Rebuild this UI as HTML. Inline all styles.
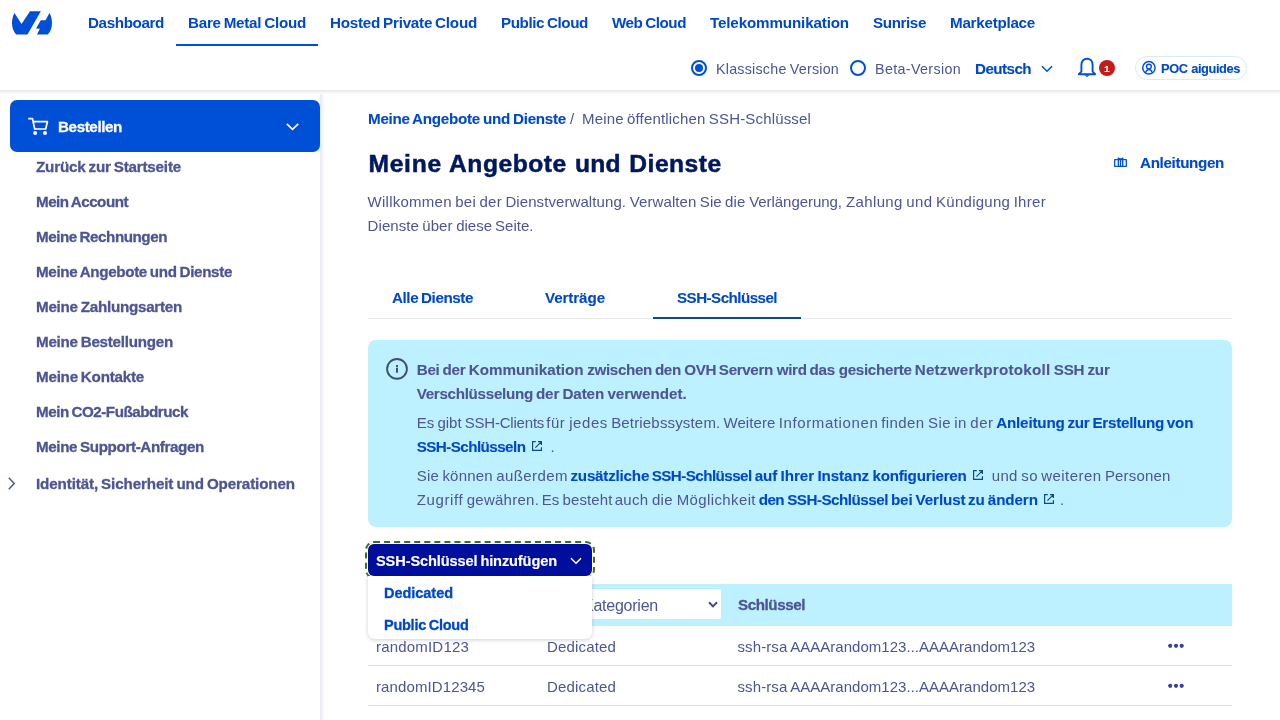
<!DOCTYPE html>
<html lang="de">
<head>
<meta charset="utf-8">
<title>Meine öffentlichen SSH-Schlüssel</title>
<style>
*{box-sizing:border-box;margin:0;padding:0}
html,body{width:1280px;height:720px;overflow:hidden;background:#fff;font-family:"Liberation Sans",sans-serif}
.a{position:absolute}
.t{position:absolute;white-space:nowrap;line-height:24px;height:24px;word-spacing:-1px}
svg{position:absolute;overflow:visible}
#hdr{left:0;top:0;width:1280px;height:90px;background:#fff}
#hsh{left:0;top:90px;width:1280px;height:4px;background:linear-gradient(to bottom,#e8e8e8,#f1f1f1 45%,#fafafa 80%,#fff)}
#side{left:320px;top:94px;width:5px;height:626px;background:linear-gradient(to right,#e9e7f4,#f3f1fd 40%,#fbfaff 75%,#fff)}
#order{left:10px;top:100px;width:310px;height:52px;background:#0050d7;border-radius:7px}
#navline{left:176px;top:44px;width:142px;height:2px;background:#0050d7}
#tabline{left:368px;top:318px;width:864px;height:1px;background:#e9e9ec}
#tabact{left:653px;top:317px;width:148px;height:2px;background:#0d4a86}
#info{left:368px;top:340px;width:864px;height:187px;background:#bef1ff;border-radius:8px}
#thead{left:368px;top:584px;width:864px;height:42px;background:#bef1ff}
#sel{left:540px;top:589px;width:180.500px;height:30px;background:#fff;border-radius:2px}
.rowline{left:368px;width:864px;height:1px;background:#c2e8f0}
#btn{left:368px;top:544px;width:224px;height:32px;background:#000e9c;border-radius:6px;outline:2px dashed #3f6e1e;outline-offset:1px}
#menu{left:368px;top:576px;width:224px;height:63px;background:#fff;border-radius:0 0 7px 7px;box-shadow:0 1px 4px rgba(0,20,70,.2)}
#pill{left:1135px;top:56px;width:112px;height:24px;border:1px solid #d6edf6;border-radius:12px;background:#fff}
#badge{left:1099px;top:60px;width:16px;height:16px;border-radius:8px;background:#c11b1b}
.rad{width:16px;height:16px;border-radius:8px;border:2px solid #0050d7;background:#fff}
</style>
</head>
<body>
<div id="root" style="position:absolute;left:0;top:0;width:1280px;height:720px;will-change:transform">
<header>
<div class="a" id="hdr"></div><div class="a" id="hsh"></div>
<!-- logo -->
<svg style="left:12px;top:11px" width="40" height="24" viewBox="0 0 40 24"><path fill="#0050d7" d="M2.5 2 L9.5 13 L18 0.2 L28.8 0.2 L15.5 23.6 L4.2 23.6 C1.6 20.600 0 16.600 0 12.200 C0 8.400 0.900 5 2.500 2 Z M37.500 2 C39.100 5 40 8.400 40 12.200 C40 16.600 38.400 20.600 35.800 23.600 L25 23.600 L27.800 17.700 L24 17.600 L28.800 9.200 L33.500 9.200 Z"/></svg>
<div class="a" id="navline"></div>
<!-- radios -->
<div class="a rad" style="left:691px;top:60px"></div><div class="a" style="left:695px;top:64px;width:8px;height:8px;border-radius:4px;background:#0050d7"></div>
<div class="a rad" style="left:850px;top:60px"></div>
<!-- lang chevron -->
<svg style="left:1041px;top:65px" width="12" height="8" viewBox="0 0 12 8"><path d="M1 1.200 L6 6.200 L11 1.200" fill="none" stroke="#0050d7" stroke-width="1.600"/></svg>
<!-- bell -->
<svg style="left:1077px;top:57px" width="20" height="21" viewBox="0 0 20 21"><path d="M1.800 17.200 L4.400 14.600 L4.400 8 C4.400 3.800 7 1.700 10 1.700 C13 1.700 15.600 3.800 15.600 8 L15.600 14.600 L18.200 17.200 Z" fill="none" stroke="#0050d7" stroke-width="1.900" stroke-linejoin="round"/><path d="M7.300 18.200 H12.700 L10 20 Z" fill="#0050d7"/></svg>
<div class="a" id="badge"></div>
<div class="a" id="pill"></div>
<!-- user icon -->
<svg style="left:1142px;top:61px" width="14" height="14" viewBox="0 0 14 14"><circle cx="6.900" cy="6.800" r="6.200" fill="none" stroke="#0050d7" stroke-width="1.500"/><circle cx="6.900" cy="5.600" r="2.400" fill="none" stroke="#0050d7" stroke-width="1.400"/><path d="M3.700 11.800 C3.900 9.400 5.400 8.600 6.900 8.600 C8.400 8.600 9.900 9.400 10.100 11.800" fill="none" stroke="#0050d7" stroke-width="1.400"/></svg>
<span class="t" style="left:88px;top:11px;font-size:15.2px;font-weight:700;color:#0049c6;letter-spacing:-0.370px;">Dashboard</span>
<span class="t" style="left:188px;top:11px;font-size:15.2px;font-weight:700;color:#0049c6;letter-spacing:-0.254px;">Bare Metal Cloud</span>
<span class="t" style="left:330px;top:11px;font-size:15.2px;font-weight:700;color:#0049c6;letter-spacing:-0.230px;">Hosted Private Cloud</span>
<span class="t" style="left:501px;top:11px;font-size:15.2px;font-weight:700;color:#0049c6;letter-spacing:-0.401px;">Public Cloud</span>
<span class="t" style="left:612px;top:11px;font-size:15.2px;font-weight:700;color:#0049c6;letter-spacing:-0.448px;">Web Cloud</span>
<span class="t" style="left:710px;top:11px;font-size:15.2px;font-weight:700;color:#0049c6;letter-spacing:-0.147px;">Telekommunikation</span>
<span class="t" style="left:873px;top:11px;font-size:15.2px;font-weight:700;color:#0049c6;letter-spacing:-0.388px;">Sunrise</span>
<span class="t" style="left:950px;top:11px;font-size:15.2px;font-weight:700;color:#0049c6;letter-spacing:-0.254px;">Marketplace</span>
<span class="t" style="left:716px;top:57px;font-size:14.3px;font-weight:400;color:#4d5592;letter-spacing:0.222px;">Klassische Version</span>
<span class="t" style="left:875px;top:57px;font-size:14.3px;font-weight:400;color:#4d5592;letter-spacing:0.345px;">Beta-Version</span>
<span class="t" style="left:975px;top:57px;font-size:15.2px;font-weight:700;color:#0049c6;letter-spacing:-0.560px;-webkit-text-stroke:0.1px #0049c6;">Deutsch</span>
<span class="t" style="left:1161px;top:57px;font-size:12.8px;font-weight:700;color:#0049c6;letter-spacing:-0.392px;word-spacing:0.5px;-webkit-text-stroke:0.1px #0049c6;">POC aiguides</span>
<span class="t" style="left:1104.3px;top:56.7px;font-size:9.5px;font-weight:700;color:#fff;letter-spacing:0.000px;-webkit-text-stroke:0.2px #fff;">1</span>
</header>
<aside>
<div class="a" id="side"></div>
<!-- order button -->
<div class="a" id="order"></div>
<svg style="left:28px;top:118px" width="20" height="18" viewBox="0 0 20 18"><path d="M0.200 0.600 H4.500 L6.700 11 H17.700 L19.400 3.700 H5.300" fill="none" stroke="#fff" stroke-width="1.700" stroke-linejoin="round"/><circle cx="7.100" cy="15.100" r="2" fill="#fff"/><circle cx="17" cy="15.100" r="2" fill="#fff"/></svg>
<svg style="left:286px;top:123px" width="13" height="8" viewBox="0 0 13 8"><path d="M0.800 0.800 L6.500 6.300 L12.200 0.800" fill="none" stroke="#fff" stroke-width="1.600"/></svg>
<!-- side chevron -->
<svg style="left:7.500px;top:476.500px" width="7" height="13" viewBox="0 0 7 13"><path d="M0.800 0.800 L6.200 6.500 L0.800 12.200" fill="none" stroke="#4d5592" stroke-width="1.500"/></svg>
<span class="t" style="left:58px;top:115px;font-size:15.2px;font-weight:700;color:#fff;letter-spacing:-0.392px;-webkit-text-stroke:0.3px #fff;">Bestellen</span>
<span class="t" style="left:36px;top:155px;font-size:15.2px;font-weight:700;color:#4d5592;letter-spacing:-0.194px;-webkit-text-stroke:0.3px #4d5592;">Zurück zur Startseite</span>
<span class="t" style="left:36px;top:190px;font-size:15.2px;font-weight:700;color:#4d5592;letter-spacing:-0.501px;-webkit-text-stroke:0.3px #4d5592;">Mein Account</span>
<span class="t" style="left:36px;top:225px;font-size:15.2px;font-weight:700;color:#4d5592;letter-spacing:-0.452px;-webkit-text-stroke:0.3px #4d5592;">Meine Rechnungen</span>
<span class="t" style="left:36px;top:260px;font-size:15.2px;font-weight:700;color:#4d5592;letter-spacing:-0.341px;-webkit-text-stroke:0.3px #4d5592;">Meine Angebote und Dienste</span>
<span class="t" style="left:36px;top:295px;font-size:15.2px;font-weight:700;color:#4d5592;letter-spacing:-0.258px;-webkit-text-stroke:0.3px #4d5592;">Meine Zahlungsarten</span>
<span class="t" style="left:36px;top:330px;font-size:15.2px;font-weight:700;color:#4d5592;letter-spacing:-0.257px;-webkit-text-stroke:0.3px #4d5592;">Meine Bestellungen</span>
<span class="t" style="left:36px;top:365px;font-size:15.2px;font-weight:700;color:#4d5592;letter-spacing:-0.232px;-webkit-text-stroke:0.3px #4d5592;">Meine Kontakte</span>
<span class="t" style="left:36px;top:400px;font-size:15.2px;font-weight:700;color:#4d5592;letter-spacing:-0.475px;-webkit-text-stroke:0.3px #4d5592;">Mein CO2-Fußabdruck</span>
<span class="t" style="left:36px;top:435px;font-size:15.2px;font-weight:700;color:#4d5592;letter-spacing:-0.372px;-webkit-text-stroke:0.3px #4d5592;">Meine Support-Anfragen</span>
<span class="t" style="left:36px;top:472px;font-size:15.2px;font-weight:700;color:#4d5592;letter-spacing:-0.126px;-webkit-text-stroke:0.3px #4d5592;">Identität, Sicherheit und Operationen</span>
</aside>
<main>
<!-- book icon -->
<svg style="left:1114px;top:157px" width="13" height="10" viewBox="0 0 13 10"><path d="M0.700 2.700 H12.300 V9.300 H0.700 Z M4.300 0.600 V9.300 M8.700 0.600 V9.300 M4.300 1.200 L6.500 2.200 L8.700 1.200 M6.500 2.400 V9.300" fill="none" stroke="#0050d7" stroke-width="1.300" stroke-linejoin="round"/></svg>
<div class="a" id="tabline"></div><div class="a" id="tabact"></div>
<div class="a" id="info"></div>
<svg style="left:386px;top:358px" width="22" height="22" viewBox="0 0 22 22"><circle cx="11" cy="10.900" r="9.900" fill="none" stroke="#3e4d7c" stroke-width="1.900"/><rect x="10" y="9.700" width="2" height="5" fill="#454a85"/><rect x="10" y="7" width="2" height="1.900" fill="#3e4d7c"/></svg>
<!-- ext link icons -->
<svg style="left:532px;top:441px" width="10" height="10" viewBox="0 0 10 10"><path d="M3.800 0.600 H0.600 V9.400 H9.400 V6.200 M6 0.600 H9.400 V4 M9.400 0.600 L3.400 6.600" fill="none" stroke="#0b4a92" stroke-width="1.200"/></svg>
<svg style="left:973px;top:470px" width="10" height="10" viewBox="0 0 10 10"><path d="M3.800 0.600 H0.600 V9.400 H9.400 V6.200 M6 0.600 H9.400 V4 M9.400 0.600 L3.400 6.600" fill="none" stroke="#0b4a92" stroke-width="1.200"/></svg>
<svg style="left:1044px;top:494px" width="10" height="10" viewBox="0 0 10 10"><path d="M3.800 0.600 H0.600 V9.400 H9.400 V6.200 M6 0.600 H9.400 V4 M9.400 0.600 L3.400 6.600" fill="none" stroke="#0b4a92" stroke-width="1.200"/></svg>
<!-- table -->
<div class="a" id="thead"></div>
<div class="a" id="sel"></div>
<svg style="left:708px;top:601px" width="10" height="7" viewBox="0 0 10 7"><path d="M1 1.200 L5 5.400 L9 1.200" fill="none" stroke="#454a80" stroke-width="2"/></svg>
<div class="a rowline" style="top:665px"></div>
<div class="a rowline" style="top:705px"></div>
<svg style="left:1168px;top:643px" width="16" height="6" viewBox="0 0 16 6"><circle cx="2.200" cy="2.800" r="2.100" fill="#403c9e"/><circle cx="8" cy="2.800" r="2.100" fill="#403c9e"/><circle cx="13.700" cy="2.800" r="2.100" fill="#403c9e"/></svg>
<svg style="left:1168px;top:683px" width="16" height="6" viewBox="0 0 16 6"><circle cx="2.200" cy="2.800" r="2.100" fill="#403c9e"/><circle cx="8" cy="2.800" r="2.100" fill="#403c9e"/><circle cx="13.700" cy="2.800" r="2.100" fill="#403c9e"/></svg>
<span class="t" style="left:368px;top:107px;font-size:15.2px;font-weight:700;color:#0049c6;letter-spacing:-0.264px;-webkit-text-stroke:0.1px #0049c6;">Meine Angebote und Dienste</span>
<span class="t" style="left:570px;top:107px;font-size:15px;font-weight:400;color:#4d5592;letter-spacing:0.000px;">/</span>
<span class="t" style="left:582px;top:107px;font-size:15px;font-weight:400;color:#4d5592;letter-spacing:0.166px;">Meine öffentlichen SSH-Schlüssel</span>
<span class="t" style="left:368.5px;top:152px;font-size:24.6px;font-weight:700;color:#00185e;letter-spacing:0.729px;-webkit-text-stroke:0.5px #00185e;">Meine</span>
<span class="t" style="left:449px;top:152px;font-size:24.6px;font-weight:700;color:#00185e;letter-spacing:0.555px;-webkit-text-stroke:0.5px #00185e;">Angebote</span>
<span class="t" style="left:575px;top:152px;font-size:24.6px;font-weight:700;color:#00185e;letter-spacing:0.174px;-webkit-text-stroke:0.5px #00185e;">und</span>
<span class="t" style="left:629.3px;top:152px;font-size:24.6px;font-weight:700;color:#00185e;letter-spacing:0.494px;-webkit-text-stroke:0.5px #00185e;">Dienste</span>
<span class="t" style="left:1140px;top:151px;font-size:15.2px;font-weight:700;color:#0049c6;letter-spacing:-0.341px;-webkit-text-stroke:0.1px #0049c6;">Anleitungen</span>
<span class="t" style="left:367.59999999999997px;top:190px;font-size:15px;font-weight:400;color:#4d5592;letter-spacing:0.255px;">Willkommen bei der</span>
<span class="t" style="left:505.4px;top:190px;font-size:15px;font-weight:400;color:#4d5592;letter-spacing:0.086px;">Dienstverwaltung.</span>
<span class="t" style="left:629.7px;top:190px;font-size:15px;font-weight:400;color:#4d5592;letter-spacing:0.106px;">Verwalten Sie die</span>
<span class="t" style="left:749.2px;top:190px;font-size:15px;font-weight:400;color:#4d5592;letter-spacing:-0.054px;">Verlängerung,</span>
<span class="t" style="left:846.0px;top:190px;font-size:15px;font-weight:400;color:#4d5592;letter-spacing:0.363px;">Zahlung und</span>
<span class="t" style="left:936.0px;top:190px;font-size:15px;font-weight:400;color:#4d5592;letter-spacing:0.277px;">Kündigung Ihrer</span>
<span class="t" style="left:367.59999999999997px;top:214px;font-size:15px;font-weight:400;color:#4d5592;letter-spacing:0.078px;">Dienste über</span>
<span class="t" style="left:456.2px;top:214px;font-size:15px;font-weight:400;color:#4d5592;letter-spacing:-0.016px;">diese Seite.</span>
<span class="t" style="left:392px;top:286px;font-size:15.2px;font-weight:700;color:#0049c6;letter-spacing:-0.411px;-webkit-text-stroke:0.1px #0049c6;">Alle Dienste</span>
<span class="t" style="left:545px;top:286px;font-size:15.2px;font-weight:700;color:#0049c6;letter-spacing:-0.100px;-webkit-text-stroke:0.1px #0049c6;">Verträge</span>
<span class="t" style="left:677px;top:286px;font-size:15.2px;font-weight:700;color:#0049c6;letter-spacing:-0.554px;-webkit-text-stroke:0.1px #0049c6;">SSH-Schlüssel</span>
<span class="t" style="left:416.7px;top:358px;font-size:15.2px;font-weight:700;color:#4d5592;letter-spacing:-0.257px;-webkit-text-stroke:0.1px #4d5592;">Bei der</span>
<span class="t" style="left:468.7px;top:358px;font-size:15.2px;font-weight:700;color:#4d5592;letter-spacing:0.014px;-webkit-text-stroke:0.1px #4d5592;">Kommunikation</span>
<span class="t" style="left:587.2px;top:358px;font-size:15.2px;font-weight:700;color:#4d5592;letter-spacing:-0.338px;-webkit-text-stroke:0.1px #4d5592;">zwischen den</span>
<span class="t" style="left:684.2px;top:358px;font-size:15.2px;font-weight:700;color:#4d5592;letter-spacing:-0.364px;-webkit-text-stroke:0.1px #4d5592;">OVH Servern</span>
<span class="t" style="left:776.7px;top:358px;font-size:15.2px;font-weight:700;color:#4d5592;letter-spacing:-0.303px;-webkit-text-stroke:0.1px #4d5592;">wird das</span>
<span class="t" style="left:838.7px;top:358px;font-size:15.2px;font-weight:700;color:#4d5592;letter-spacing:-0.303px;-webkit-text-stroke:0.1px #4d5592;">gesicherte</span>
<span class="t" style="left:914.7px;top:358px;font-size:15.2px;font-weight:700;color:#4d5592;letter-spacing:0.238px;-webkit-text-stroke:0.1px #4d5592;">Netzwerkprotokoll</span>
<span class="t" style="left:1053.7px;top:358px;font-size:15.2px;font-weight:700;color:#4d5592;letter-spacing:-0.183px;-webkit-text-stroke:0.1px #4d5592;">SSH zur</span>
<span class="t" style="left:416.7px;top:382px;font-size:15.2px;font-weight:700;color:#4d5592;letter-spacing:-0.301px;-webkit-text-stroke:0.1px #4d5592;">Verschlüsselung</span>
<span class="t" style="left:535.95px;top:382px;font-size:15.2px;font-weight:700;color:#4d5592;letter-spacing:-0.096px;-webkit-text-stroke:0.1px #4d5592;">der Daten</span>
<span class="t" style="left:607.45px;top:382px;font-size:15.2px;font-weight:700;color:#4d5592;letter-spacing:-0.014px;-webkit-text-stroke:0.1px #4d5592;">verwendet.</span>
<span class="t" style="left:416.7px;top:411px;font-size:15px;font-weight:400;color:#4d5592;letter-spacing:0.013px;">Es gibt</span>
<span class="t" style="left:464.7px;top:411px;font-size:15px;font-weight:400;color:#4d5592;letter-spacing:-0.203px;">SSH-Clients</span>
<span class="t" style="left:546.2px;top:411px;font-size:15px;font-weight:400;color:#4d5592;letter-spacing:0.573px;">für jedes</span>
<span class="t" style="left:611.2px;top:411px;font-size:15px;font-weight:400;color:#4d5592;letter-spacing:0.166px;">Betriebssystem.</span>
<span class="t" style="left:723.45px;top:411px;font-size:15px;font-weight:400;color:#4d5592;letter-spacing:0.075px;">Weitere</span>
<span class="t" style="left:778.7px;top:411px;font-size:15px;font-weight:400;color:#4d5592;letter-spacing:0.613px;">Informationen</span>
<span class="t" style="left:881.2px;top:411px;font-size:15px;font-weight:400;color:#4d5592;letter-spacing:0.398px;">finden Sie</span>
<span class="t" style="left:954.2px;top:411px;font-size:15px;font-weight:400;color:#4d5592;letter-spacing:0.445px;">in der</span>
<span class="t" style="left:996.2px;top:411px;font-size:15.2px;font-weight:700;color:#0049c6;letter-spacing:-0.176px;-webkit-text-stroke:0.1px #0049c6;">Anleitung</span>
<span class="t" style="left:1067.45px;top:411px;font-size:15.2px;font-weight:700;color:#0049c6;letter-spacing:-0.255px;-webkit-text-stroke:0.1px #0049c6;">zur Erstellung</span>
<span class="t" style="left:1166.7px;top:411px;font-size:15.2px;font-weight:700;color:#0049c6;letter-spacing:-0.022px;-webkit-text-stroke:0.1px #0049c6;">von</span>
<span class="t" style="left:416.7px;top:435px;font-size:15.2px;font-weight:700;color:#0049c6;letter-spacing:-0.556px;-webkit-text-stroke:0.1px #0049c6;">SSH-Schlüsseln</span>
<span class="t" style="left:550.6px;top:435px;font-size:15px;font-weight:400;color:#4d5592;letter-spacing:0.000px;">.</span>
<span class="t" style="left:416.7px;top:464px;font-size:15px;font-weight:400;color:#4d5592;letter-spacing:0.214px;">Sie können</span>
<span class="t" style="left:496.2px;top:464px;font-size:15px;font-weight:400;color:#4d5592;letter-spacing:0.416px;">außerdem</span>
<span class="t" style="left:570.45px;top:464px;font-size:15.2px;font-weight:700;color:#0049c6;letter-spacing:-0.212px;-webkit-text-stroke:0.1px #0049c6;">zusätzliche</span>
<span class="t" style="left:651.7px;top:464px;font-size:15.2px;font-weight:700;color:#0049c6;letter-spacing:-0.558px;-webkit-text-stroke:0.1px #0049c6;">SSH-Schlüssel</span>
<span class="t" style="left:754.7px;top:464px;font-size:15.2px;font-weight:700;color:#0049c6;letter-spacing:-0.035px;-webkit-text-stroke:0.1px #0049c6;">auf Ihrer</span>
<span class="t" style="left:817.45px;top:464px;font-size:15.2px;font-weight:700;color:#0049c6;letter-spacing:-0.090px;-webkit-text-stroke:0.1px #0049c6;">Instanz</span>
<span class="t" style="left:872.45px;top:464px;font-size:15.2px;font-weight:700;color:#0049c6;letter-spacing:-0.219px;-webkit-text-stroke:0.1px #0049c6;">konfigurieren</span>
<span class="t" style="left:991.7px;top:464px;font-size:15px;font-weight:400;color:#4d5592;letter-spacing:0.359px;">und so</span>
<span class="t" style="left:1041.2px;top:464px;font-size:15px;font-weight:400;color:#4d5592;letter-spacing:0.468px;">weiteren</span>
<span class="t" style="left:1104.95px;top:464px;font-size:15px;font-weight:400;color:#4d5592;letter-spacing:0.154px;">Personen</span>
<span class="t" style="left:416.7px;top:488px;font-size:15px;font-weight:400;color:#4d5592;letter-spacing:0.636px;">Zugriff</span>
<span class="t" style="left:466.7px;top:488px;font-size:15px;font-weight:400;color:#4d5592;letter-spacing:0.265px;">gewähren.</span>
<span class="t" style="left:541.7px;top:488px;font-size:15px;font-weight:400;color:#4d5592;letter-spacing:0.081px;">Es besteht</span>
<span class="t" style="left:614.7px;top:488px;font-size:15px;font-weight:400;color:#4d5592;letter-spacing:0.310px;">auch die</span>
<span class="t" style="left:676.7px;top:488px;font-size:15px;font-weight:400;color:#4d5592;letter-spacing:0.379px;">Möglichkeit</span>
<span class="t" style="left:758.7px;top:488px;font-size:15.2px;font-weight:700;color:#0049c6;letter-spacing:-0.522px;-webkit-text-stroke:0.1px #0049c6;">den</span>
<span class="t" style="left:787.2px;top:488px;font-size:15.2px;font-weight:700;color:#0049c6;letter-spacing:-0.500px;-webkit-text-stroke:0.1px #0049c6;">SSH-Schlüssel</span>
<span class="t" style="left:890.95px;top:488px;font-size:15.2px;font-weight:700;color:#0049c6;letter-spacing:-0.124px;-webkit-text-stroke:0.1px #0049c6;">bei Verlust</span>
<span class="t" style="left:967.95px;top:488px;font-size:15.2px;font-weight:700;color:#0049c6;letter-spacing:-0.087px;-webkit-text-stroke:0.1px #0049c6;">zu ändern</span>
<span class="t" style="left:1059.9px;top:488px;font-size:15px;font-weight:400;color:#4d5592;letter-spacing:0.000px;">.</span>
<span class="t" style="left:738px;top:593px;font-size:15.2px;font-weight:700;color:#4d5592;letter-spacing:-0.436px;-webkit-text-stroke:0.3px #4d5592;">Schlüssel</span>
<span class="t" style="left:554.02px;top:594px;font-size:16px;font-weight:400;color:#4d5592;letter-spacing:-0.235px;">Alle Kategorien</span>
<span class="t" style="left:547px;top:635px;font-size:15px;font-weight:400;color:#4d5592;letter-spacing:0.161px;">Dedicated</span>
<span class="t" style="left:737.5px;top:635px;font-size:15px;font-weight:400;color:#4d5592;letter-spacing:0.102px;">ssh-rsa</span>
<span class="t" style="left:790.2px;top:635px;font-size:15px;font-weight:400;color:#4d5592;letter-spacing:0.023px;">AAAArandom123...AAAArandom123</span>
<span class="t" style="left:547px;top:675px;font-size:15px;font-weight:400;color:#4d5592;letter-spacing:0.161px;">Dedicated</span>
<span class="t" style="left:737.5px;top:675px;font-size:15px;font-weight:400;color:#4d5592;letter-spacing:0.102px;">ssh-rsa</span>
<span class="t" style="left:790.2px;top:675px;font-size:15px;font-weight:400;color:#4d5592;letter-spacing:0.023px;">AAAArandom123...AAAArandom123</span>
<span class="t" style="left:376px;top:635px;font-size:15px;font-weight:400;color:#4d5592;letter-spacing:0.192px;">randomID123</span>
<span class="t" style="left:376px;top:675px;font-size:15px;font-weight:400;color:#4d5592;letter-spacing:0.109px;">randomID12345</span>
<!-- button + dropdown -->
<div class="a" id="btn"></div>
<div class="a" id="menu"></div>
<svg style="left:570px;top:557px" width="12" height="8" viewBox="0 0 12 8"><path d="M1 1.200 L6 6.200 L11 1.200" fill="none" stroke="#fff" stroke-width="1.600"/></svg>
<span class="t" style="left:376px;top:549px;font-size:14.6px;font-weight:700;color:#fff;letter-spacing:-0.120px;-webkit-text-stroke:0.15px #fff;">SSH-Schlüssel hinzufügen</span>
<span class="t" style="left:384px;top:581px;font-size:14.5px;font-weight:700;color:#0049c6;letter-spacing:-0.035px;-webkit-text-stroke:0.3px #0049c6;">Dedicated</span>
<span class="t" style="left:384px;top:613px;font-size:14.5px;font-weight:700;color:#0049c6;letter-spacing:-0.259px;-webkit-text-stroke:0.3px #0049c6;">Public Cloud</span>
</main>
</div>
</body>
</html>
